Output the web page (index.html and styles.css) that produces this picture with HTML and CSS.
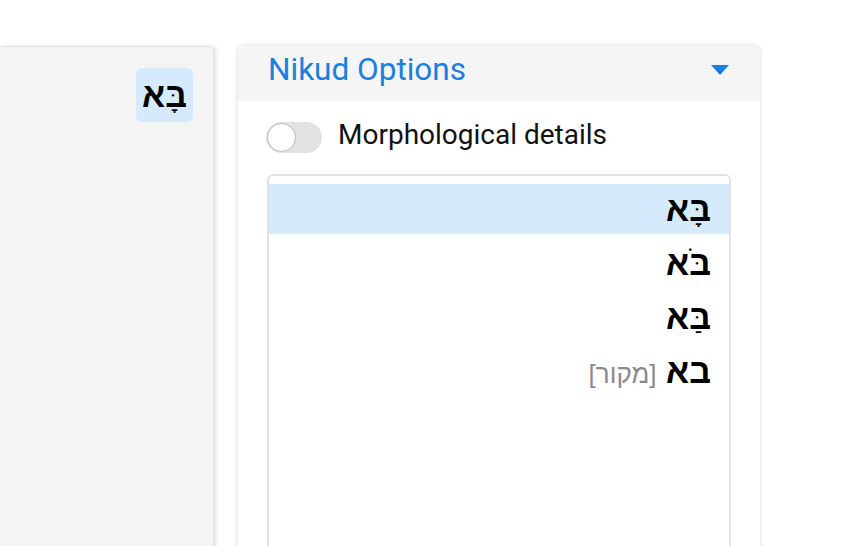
FILE: index.html
```html
<!DOCTYPE html>
<html lang="en">
<head>
  <meta charset="UTF-8">
  <title>Nikud Options</title>
  <link rel="stylesheet" href="styles.css">
</head>
<body>

  <div class="layout">
    <div class="text-panel">
      <span class="word selected" dir="rtl">בָּא</span>
    </div>

    <div class="options-card">
      <div class="card-header">
        <span class="card-title">Nikud Options</span>
        <span class="caret"></span>
      </div>

      <div class="card-body">
        <label class="switch-row">
          <span class="switch"><span class="knob"></span></span>
          <span class="switch-label">Morphological details</span>
        </label>

        <ul class="option-list" dir="rtl">
          <li class="option active">בָּא</li>
          <li class="option">בֹּא</li>
          <li class="option">בַּא</li>
          <li class="option">בא <span class="source">[מקור]</span></li>
        </ul>
      </div>
    </div>
  </div>

</body>
</html>
```

FILE: styles.css
```css
body {
  margin: 0;
  background: #fff;
  font-family: Roboto, 'Liberation Sans', sans-serif;
  overflow: hidden;
}

.layout {
  display: flex;
  align-items: flex-start;
  gap: 25px;
  padding-top: 46px;
}

.text-panel {
  width: 213px;
  height: 560px;
  padding: 21px 20px 0 0;
  box-sizing: border-box;
  display: flex;
  justify-content: flex-end;
  align-items: flex-start;
  background: #f4f4f4;
  border-top: 1px solid #e4e4e4;
  border-top-right-radius: 5px;
  box-shadow: 3px 0 4px rgba(0, 0, 0, 0.12);
}

.word {
  font-family: 'Liberation Sans', 'DejaVu Sans', sans-serif;
  font-weight: bold;
  font-size: 34px;
  line-height: 54px;
  padding: 0 6px;
  border-radius: 6px;
}

.word.selected {
  background: #d6eafd;
}

.options-card {
  width: 522px;
  height: 560px;
  background: #fff;
  border-radius: 6px;
  box-shadow: 0 0 5px rgba(0, 0, 0, 0.16);
  overflow: hidden;
}

.card-header {
  height: 55px;
  padding: 0 31px 8px 30px;
  box-sizing: border-box;
  display: flex;
  align-items: center;
  justify-content: space-between;
  background: #f5f5f5;
}

.card-title {
  color: #1a7fe0;
  font-size: 31.5px;
}

.caret {
  width: 0;
  height: 0;
  border-left: 9px solid transparent;
  border-right: 9px solid transparent;
  border-top: 10px solid #1a7fe0;
}

.card-body {
  padding: 17px 29px 0 28px;
}

.switch-row {
  display: flex;
  align-items: center;
  gap: 16px;
}

.switch {
  width: 56px;
  height: 31px;
  border-radius: 16px;
  background: #e2e2e2;
  display: flex;
  align-items: center;
}

.knob {
  width: 27px;
  height: 27px;
  margin-left: 1px;
  border-radius: 50%;
  background: #fff;
  border: 1px solid #b9b9b9;
}

.switch-label {
  font-size: 28px;
  color: #111;
  margin-bottom: 6px;
}

.option-list {
  list-style: none;
  margin: 17px 0 0 1px;
  padding: 8px 0 0;
  height: 400px;
  border: 2px solid #e2e2e2;
  border-radius: 6px;
}

.option {
  height: 50px;
  margin-bottom: 4px;
  padding-right: 18px;
  font-family: 'Liberation Sans', 'DejaVu Sans', sans-serif;
  font-weight: bold;
  font-size: 34px;
  line-height: 50px;
  color: #000;
}

.option.active {
  background: #d6eafd;
}

.source {
  font-weight: normal;
  font-size: 26px;
  color: #8a8a8a;
}
```
